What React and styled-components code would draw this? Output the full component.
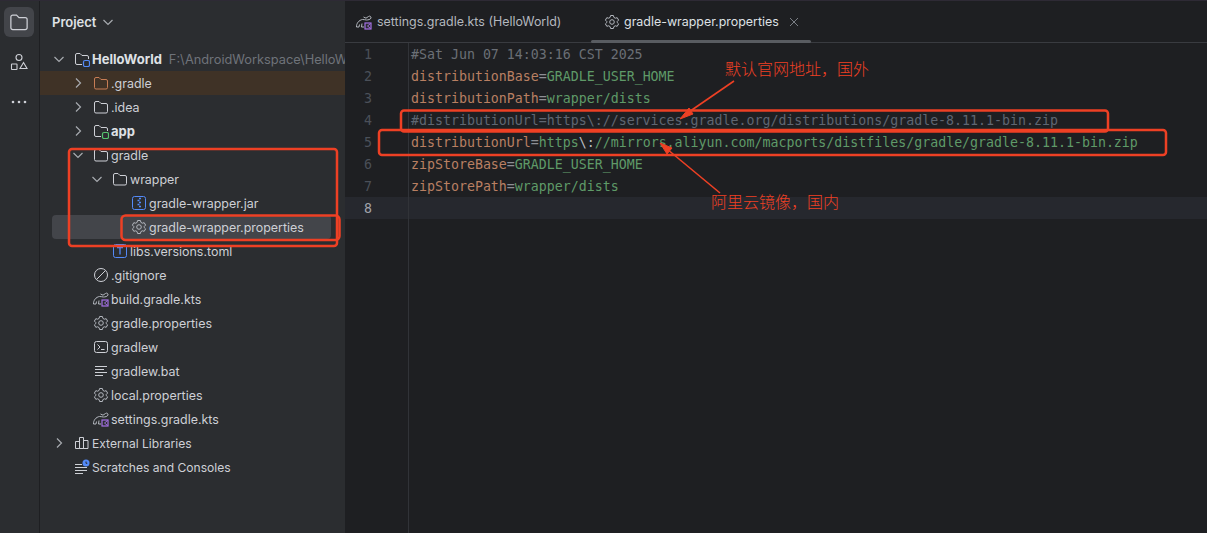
import React from 'react'
import styled, { createGlobalStyle } from 'styled-components'

const GlobalStyle = createGlobalStyle`
	html, body {
		margin: 0;
		height: 100%;
		overflow: hidden;
		background: #1e1f22;
	}
	svg {
		flex: none;
	}
`

const Page = styled.div`
	position: relative;
	display: flex;
	width: 1207px;
	height: 533px;
	box-sizing: border-box;
	border-top: 1px solid #2e2a35;
	font-family: Inter, "Noto Sans", sans-serif;
	font-size: 12.45px;
	color: #ced0d6;
	overflow: hidden;
`

const ActivityBar = styled.nav`
	width: 40px;
	flex: none;
	box-sizing: border-box;
	background: #2b2d30;
	border-right: 1px solid #1e1f22;
	padding: 6px 5px 0 4px;
	display: flex;
	flex-direction: column;
	gap: 10px;
`

const ActivityButton = styled.div`
	width: 30px;
	height: 30px;
	border-radius: 6px;
	display: flex;
	align-items: center;
	justify-content: center;
	background: ${props => props.active ? '#43454a' : 'transparent'};
`

const Sidebar = styled.aside`
	width: 305px;
	flex: none;
	background: #2b2d30;
	display: flex;
	flex-direction: column;
`

const SidebarHeader = styled.header`
	height: 46px;
	box-sizing: border-box;
	padding: 0 0 4px 12px;
	display: flex;
	align-items: center;
	gap: 6px;
	font-size: 13px;
	font-weight: 600;
	color: #dfe1e5;
`

const TreeRow = styled.div`
	height: 24px;
	flex: none;
	box-sizing: border-box;
	display: flex;
	align-items: center;
	white-space: nowrap;
	overflow: hidden;
	border-radius: ${props => props.selected ? 4 : 0}px;
	margin: 0 ${props => props.tinted || props.bleed ? 0 : 14}px 0 ${props => props.tinted ? 0 : 12}px;
	padding-left: ${props => (props.tinted ? 12 : 0) + props.depth * 19}px;
	background: ${props => props.selected ? '#43454a' : props.tinted ? '#3f3226' : 'transparent'};
`

const ChevronSlot = styled.span`
	width: 14px;
	height: 16px;
	margin-right: 8px;
	flex: none;
	display: flex;
	align-items: center;
	justify-content: center;
`

const TreeLabel = styled.span`
	margin-left: 2px;
	font-size: ${props => props.bold ? 13 : props.depth === 0 ? 12.1 : 12.45}px;
	font-weight: ${props => props.bold ? 700 : 400};
	color: ${props => props.bold ? '#dfe1e5' : '#ced0d6'};
`

const TreeHint = styled.span`
	margin-left: 7px;
	font-size: 12.8px;
	color: #6f737a;
`

const Editor = styled.main`
	flex: 1;
	min-width: 0;
	background: #1e1f22;
	display: flex;
	flex-direction: column;
`

const TabBar = styled.div`
	height: 42px;
	flex: none;
	box-sizing: border-box;
	border-bottom: 1px solid #393b40;
	display: flex;
`

const Tab = styled.div`
	position: relative;
	box-sizing: border-box;
	width: ${props => props.width}px;
	padding-left: ${props => props.inset}px;
	display: flex;
	align-items: center;
	gap: ${props => props.active ? 4 : 5}px;
	white-space: nowrap;
	color: ${props => props.active ? '#dfe1e5' : '#b4b8bf'};

	${props => props.active && `
		&::after {
			content: '';
			position: absolute;
			left: 0;
			right: 0;
			bottom: -1px;
			height: 3px;
			border-radius: 2px;
			background: #595c61;
		}
	`}
`

const TabClose = styled.span`
	display: flex;
	margin-left: 5px;
`

const CodeArea = styled.div`
	flex: 1;
	display: flex;
	font-family: "DejaVu Sans Mono", "Liberation Mono", monospace;
	font-size: 13.28px;
`

const Gutter = styled.div`
	width: 64px;
	flex: none;
	box-sizing: border-box;
	border-right: 1px solid #313338;
`

const LineNumber = styled.div`
	height: 20px;
	line-height: 20px;
	padding: 2px 36px 0 0;
	text-align: right;
	color: ${props => props.current ? '#a1a3ab' : '#4b5059'};
	background: ${props => props.current ? '#26282e' : 'transparent'};
`

const Code = styled.div`
	flex: 1;
	min-width: 0;
`

const CodeLine = styled.div`
	height: 20px;
	line-height: 20px;
	padding: 2px 0 0 2px;
	white-space: pre;
	background: ${props => props.current ? '#26282e' : 'transparent'};
`

const Token = styled.span`
	color: ${props => ({
		comment: '#6b6f76',
		muted: '#5f6672',
		key: '#b97f62',
		eq: '#8d8f95',
		value: '#5f9a68',
		escape: '#bcbec4',
	})[props.kind]};
`

const Annotations = styled.svg`
	position: absolute;
	left: 0;
	top: 0;
	pointer-events: none;
`

const Note = styled.div`
	position: absolute;
	left: ${props => props.x}px;
	top: ${props => props.y}px;
	font-family: "Noto Sans CJK SC", sans-serif;
	font-size: 16px;
	line-height: 20px;
	font-weight: 300;
	color: #ee4024;
	white-space: nowrap;
`

const GRAY = '#ced0d6'
const RED = '#ee4024'

const Chevron = ({ open }) => (
	<svg width="12" height="12" viewBox="0 0 12 12" fill="none" stroke="#a8abb0" strokeWidth="1.2">
		<path d={open ? 'M1.5 4L6 8.5L10.5 4' : 'M4 1.5L8.5 6L4 10.5'} />
	</svg>
)

const Folder = ({ color = GRAY, size = 16 }) => (
	<svg width={size} height={size} viewBox="0 0 16 16" fill="none" stroke={color} strokeWidth="1">
		<path d="M1.5 4a1.5 1.5 0 0 1 1.5-1.5h3l2 2h5A1.5 1.5 0 0 1 14.5 6v6.5A1.5 1.5 0 0 1 13 14H3a1.5 1.5 0 0 1-1.5-1.5z" />
	</svg>
)

const ModuleFolder = ({ badge }) => (
	<svg width="16" height="16" viewBox="0 0 16 16" fill="none">
		<path stroke={GRAY} d="M8 13.5H3A1.5 1.5 0 0 1 1.5 12V4A1.5 1.5 0 0 1 3 2.5h3l2 2h5A1.5 1.5 0 0 1 14.5 6v2" />
		<rect x="9.5" y="9.5" width="6" height="6" rx="1.5" stroke={badge} strokeWidth="1.2" fill="#2b2d30" />
	</svg>
)

const Gear = ({ color = '#b4b8bf' }) => (
	<svg width="16" height="16" viewBox="0 0 16 16" fill="none" stroke={color} strokeWidth="1">
		<path d="M6.6 1.5h2.8l.5 1.9 1.4.8 1.9-.5 1.4 2.4-1.4 1.4v1l1.4 1.4-1.4 2.4-1.9-.5-1.4.8-.5 1.9H6.6l-.5-1.9-1.4-.8-1.9.5-1.4-2.4L2.800 8.500v-1L1.400 6.100l1.400-2.400 1.900.5 1.400-.8z" />
		<circle cx="8" cy="8" r="2.300" />
	</svg>
)

const GradleKts = () => (
	<svg width="16" height="16" viewBox="0 0 16 16" fill="none">
		<path stroke="#b4b8bf" d="M.5 13C.2 9.500 3 6 6.500 5.500c1.500-.2 2.500.5 4 .5 1.500 0 4-.5 4.500-2 .4-1.500-1.500-2.500-2.500-1.500M.5 13h2.500l.5-2.500M6 9.500L5.500 13H8" />
		<path stroke="#b4b8bf" d="M7.500 3l2.500 1.200L12.500 2.500" />
		<rect x="9" y="9" width="6" height="6" fill="#2b2d30" stroke="#a571e6" strokeWidth="1.200" />
		<path stroke="#a571e6" d="M14.500 9.500L11.500 12l3 2.500" />
	</svg>
)

const Jar = () => (
	<svg width="16" height="16" viewBox="0 0 16 16" fill="none">
		<rect x="1.500" y="1.500" width="13" height="13" rx="2" stroke="#548af7" />
		<path stroke="#548af7" strokeWidth="1.300" d="M8 3.500h2M6.500 5.500h2M8 7.500h2M6.500 9.500h2M8 11.500h2" />
	</svg>
)

const Toml = () => (
	<svg width="16" height="16" viewBox="0 0 16 16" fill="none">
		<rect x="1.500" y="1.500" width="13" height="13" rx="2" stroke="#548af7" />
		<path stroke="#548af7" strokeWidth="1.300" d="M5 4.500h6M8 4.500v7" />
	</svg>
)

const Ignore = () => (
	<svg width="16" height="16" viewBox="0 0 16 16" fill="none" stroke={GRAY}>
		<circle cx="8" cy="8" r="6.500" />
		<path d="M3.500 12.500l9-9" />
	</svg>
)

const Terminal = () => (
	<svg width="16" height="16" viewBox="0 0 16 16" fill="none" stroke={GRAY}>
		<rect x="1.500" y="2.500" width="13" height="11" rx="2" />
		<path d="M4.500 5.500L7 8l-2.500 2.500M8 10.500h3.500" />
	</svg>
)

const TextFile = () => (
	<svg width="16" height="16" viewBox="0 0 16 16" fill="none" stroke={GRAY}>
		<path d="M2 3.500h12M2 6.500h9M2 9.500h12M2 12.500h8" />
	</svg>
)

const Libraries = () => (
	<svg width="16" height="16" viewBox="0 0 16 16" fill="none" stroke={GRAY}>
		<path d="M1.500 6.500h4v7h-4zM5.500 2.500h4v11h-4zM9.500 5.500h4.500v8H9.500z" />
	</svg>
)

const Scratches = () => (
	<svg width="16" height="16" viewBox="0 0 16 16" fill="none" stroke={GRAY}>
		<path d="M1 5.500h7M1 8.500h12M1 11.500h12M1 14.500h8" />
		<circle cx="12" cy="4" r="3.500" fill="#548af7" stroke="none" />
		<path d="M12 2.500V4.300h1.300" stroke="#2b2d30" />
	</svg>
)

const Shapes = () => (
	<svg width="20" height="20" viewBox="0 0 20 20" fill="none" stroke="#ced0d6" strokeWidth="1.100">
		<circle cx="10" cy="5.500" r="3" />
		<rect x="2.500" y="12" width="5.500" height="5.500" rx="0.500" />
		<path d="M14.500 10.500l3.500 6h-7z" />
	</svg>
)

const Dots = () => (
	<svg width="20" height="20" viewBox="0 0 20 20" fill="#ced0d6">
		<circle cx="4" cy="10" r="1.300" />
		<circle cx="10" cy="10" r="1.300" />
		<circle cx="16" cy="10" r="1.300" />
	</svg>
)

const tree = [
	{ depth: 0, open: true, icon: <ModuleFolder badge="#548af7" />, label: 'HelloWorld', bold: true, hint: 'F:\\AndroidWorkspace\\HelloWorld' },
	{ depth: 1, open: false, icon: <Folder color="#c77d55" />, label: '.gradle', tinted: true },
	{ depth: 1, open: false, icon: <Folder />, label: '.idea' },
	{ depth: 1, open: false, icon: <ModuleFolder badge="#57c46f" />, label: 'app', bold: true },
	{ depth: 1, open: true, icon: <Folder />, label: 'gradle' },
	{ depth: 2, open: true, icon: <Folder />, label: 'wrapper' },
	{ depth: 3, icon: <Jar />, label: 'gradle-wrapper.jar' },
	{ depth: 3, icon: <Gear />, label: 'gradle-wrapper.properties', selected: true },
	{ depth: 2, icon: <Toml />, label: 'libs.versions.toml' },
	{ depth: 1, icon: <Ignore />, label: '.gitignore' },
	{ depth: 1, icon: <GradleKts />, label: 'build.gradle.kts' },
	{ depth: 1, icon: <Gear />, label: 'gradle.properties' },
	{ depth: 1, icon: <Terminal />, label: 'gradlew' },
	{ depth: 1, icon: <TextFile />, label: 'gradlew.bat' },
	{ depth: 1, icon: <Gear />, label: 'local.properties' },
	{ depth: 1, icon: <GradleKts />, label: 'settings.gradle.kts' },
	{ depth: 0, open: false, icon: <Libraries />, label: 'External Libraries' },
	{ depth: 0, icon: <Scratches />, label: 'Scratches and Consoles' },
]

const pair = (key, value) => [['key', key], ['eq', '='], ['value', value]]

const lines = [
	[['comment', '#Sat Jun 07 14:03:16 CST 2025']],
	pair('distributionBase', 'GRADLE_USER_HOME'),
	pair('distributionPath', 'wrapper/dists'),
	[['muted', '#distributionUrl=https\\://services.gradle.org/distributions/gradle-8.11.1-bin.zip']],
	[['key', 'distributionUrl'], ['eq', '='], ['value', 'https'], ['escape', '\\:'], ['value', '//mirrors.aliyun.com/macports/distfiles/gradle/gradle-8.11.1-bin.zip']],
	pair('zipStoreBase', 'GRADLE_USER_HOME'),
	pair('zipStorePath', 'wrapper/dists'),
	[],
]

export default function App() {
	return (
		<Page>
			<GlobalStyle />
			<ActivityBar>
				<ActivityButton active><Folder size={20} /></ActivityButton>
				<ActivityButton><Shapes /></ActivityButton>
				<ActivityButton><Dots /></ActivityButton>
			</ActivityBar>

			<Sidebar>
				<SidebarHeader>
					Project
					<Chevron open />
				</SidebarHeader>
				{tree.map(item => (
					<TreeRow key={item.label} depth={item.depth} tinted={item.tinted} selected={item.selected} bleed={!!item.hint}>
						<ChevronSlot>{item.open !== undefined && <Chevron open={item.open} />}</ChevronSlot>
						{item.icon}
						<TreeLabel bold={item.bold} depth={item.depth}>{item.label}</TreeLabel>
						{item.hint && <TreeHint>{item.hint}</TreeHint>}
					</TreeRow>
				))}
			</Sidebar>

			<Editor>
				<TabBar>
					<Tab width={246} inset={11}>
						<GradleKts />
						settings.gradle.kts (HelloWorld)
					</Tab>
					<Tab active width={220} inset={13}>
						<Gear />
						gradle-wrapper.properties
						<TabClose>
							<svg width="12" height="12" viewBox="0 0 12 12" stroke="#7a7e85">
								<path d="M2 2l8 8M10 2l-8 8" />
							</svg>
						</TabClose>
					</Tab>
				</TabBar>
				<CodeArea>
					<Gutter>
						{lines.map((_, i) => (
							<LineNumber key={i} current={i === 7}>{i + 1}</LineNumber>
						))}
					</Gutter>
					<Code>
						{lines.map((tokens, i) => (
							<CodeLine key={i} current={i === 7}>
								{tokens.map(([kind, text], j) => <Token key={j} kind={kind}>{text}</Token>)}
							</CodeLine>
						))}
					</Code>
				</CodeArea>
			</Editor>

			<Annotations width="1207" height="533" viewBox="0 1 1207 533" fill="none" stroke={RED} strokeWidth="2.500">
				<rect x="69" y="149" width="268" height="97" rx="3" />
				<rect x="121.500" y="215.500" width="218" height="24.500" rx="4" />
				<rect x="401" y="110.500" width="707" height="21" rx="3" />
				<rect x="379" y="130" width="787" height="25" rx="3" />
				<path d="M734 81L686 114" strokeWidth="1.600" />
				<path d="M680 119L689 108L693 114z" fill={RED} strokeWidth="1" />
				<path d="M720 193L667 149" strokeWidth="1.600" />
				<path d="M660 143L672 148L667 154z" fill={RED} strokeWidth="1" />
			</Annotations>
			<Note x={725} y={57}>默认官网地址，国外</Note>
			<Note x={711} y={190}>阿里云镜像，国内</Note>
		</Page>
	)
}
